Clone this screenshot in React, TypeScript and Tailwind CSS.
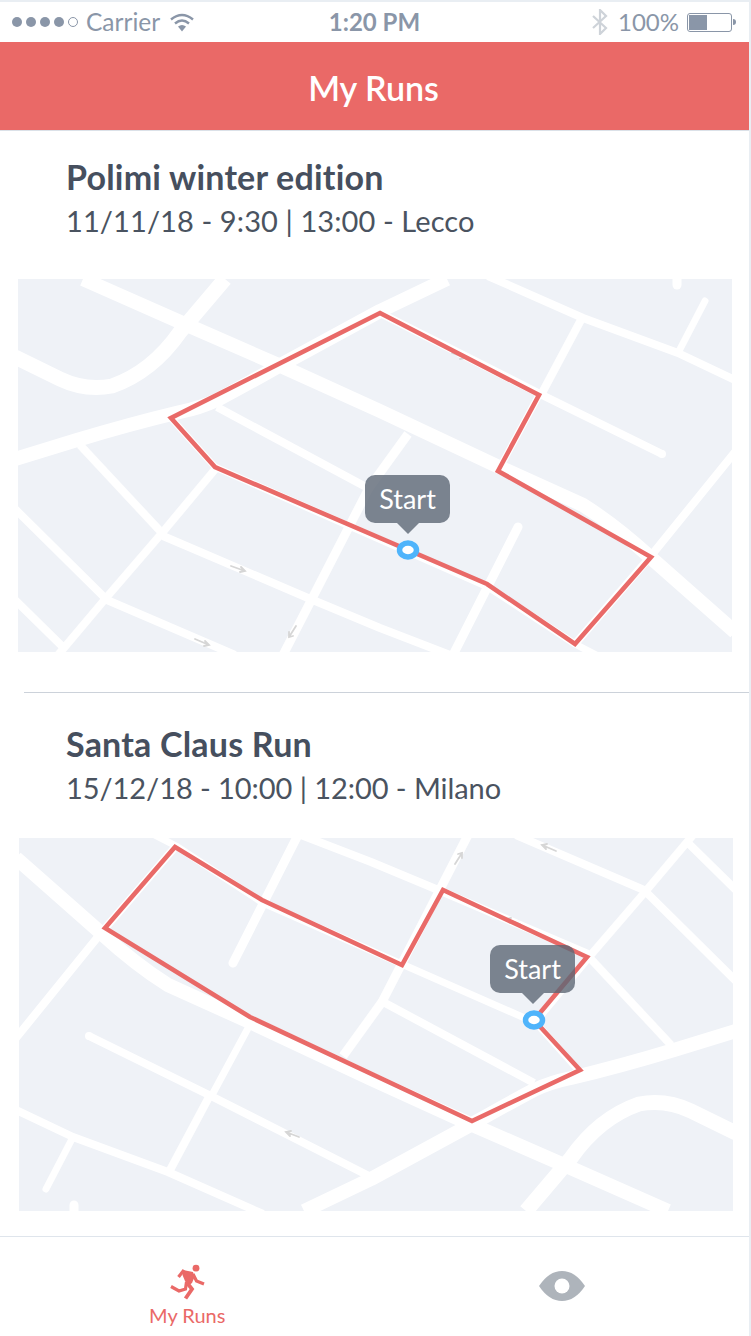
const lato = "font-['Lato',sans-serif]";

// road layer, drawn once in the coordinates of the first map. The second map is the same sheet turned 180deg.
function Roads() {
  return (
    <g fill="none" stroke="#ffffff" strokeLinecap="butt" strokeLinejoin="round">
      {/* thick avenues */}
      <path d="M83 279 L187 325 L283 367 L380 411 L497 466 L583 505 Q615 525 650 557 L735 632" strokeWidth="14" />
      <path d="M447 279 L380 311 L277 367 Q240 388 217 400 Q200 408 180 412 Q130 424 77 440 L15 459" strokeWidth="14" />
      <path d="M225 279 L180 332 Q152 372 112 386 Q85 391 60 379 L15 357" strokeWidth="15" />
      {/* smaller streets */}
      <path d="M488 276 L583 318 L678 353 L735 380" strokeWidth="8" />
      <path d="M380 313 L542 395 L662 454" strokeWidth="8" />
      <path d="M662 454 L662 454" strokeWidth="8" strokeLinecap="round" />
      <path d="M217 407 L366 487" strokeWidth="8" />
      <path d="M283 655 L369 488 L408 434" strokeWidth="9" />
      <path d="M217 467 L162 533 L106 598 L58 655" strokeWidth="8" />
      <path d="M80 445 L162 533" strokeWidth="8" />
      <path d="M15 509 L105 598" strokeWidth="8" />
      <path d="M15 600 L66 650" strokeWidth="8" />
      <path d="M163 536 L308 598 L380 628 L450 655" strokeWidth="8" />
      <path d="M107 600 L235 655" strokeWidth="8" />
      <path d="M518 527 L453 655" strokeWidth="9" strokeLinecap="round" />
      <path d="M582 318 L542 393" strokeWidth="8" />
      <path d="M705 301 L678 353" strokeWidth="7" strokeLinecap="round" />
      <path d="M677 276 L677 285" strokeWidth="9" strokeLinecap="round" />
      <path d="M735 452 L650 557 L575 644" strokeWidth="8" />
      <path d="M215 467 L488 587 L575 644 L600 657" strokeWidth="7" />
      <path d="M171 418 L215 467" strokeWidth="7" />
      <path d="M539 395 L498 471" strokeWidth="7" />
      {/* one way arrows */}
      <g stroke="#d6d6d6" strokeWidth="1.8" strokeLinecap="round" strokeLinejoin="miter">
        <path d="M231 566 L245 571 M241 567 L245 571 L240 572" />
        <path d="M195 639 L209 645 M205 641 L209 645 L204 646" />
        <path d="M296 626 L289 637 M289 632 L289 637 L293 636" />
        <path d="M452 353 L465 358 M461 354 L465 358 L460 359" />
      </g>
    </g>
  );
}

function RunMap({ route, marker, tip, turned, className }: { route: string; marker: [number, number]; tip: string; turned?: boolean; className: string }) {
  return (
    <div className={`relative h-[373px] w-[714px] bg-[#eff2f7] ${className}`}>
      <svg viewBox="0 0 714 373" className="block h-full w-full">
        <g transform={turned ? 'rotate(180 357 186.5) translate(-18 -279)' : 'translate(-18 -279)'}>
          <Roads />
        </g>
        <polygon points={route} fill="none" stroke="#e96a68" strokeWidth="4.6" strokeLinejoin="miter" />
        <ellipse cx={marker[0]} cy={marker[1]} rx="8.5" ry="7" fill="#ffffff" stroke="#4fb4fb" strokeWidth="5.5" />
      </svg>
      <div className={`absolute h-[48px] w-[85px] ${tip}`}>
        <div className={`flex h-full items-center justify-center rounded-[10px] bg-[#5d6774]/80 text-[27px] text-white ${lato}`}>
          Start
        </div>
        <div className="mx-auto h-0 w-0 border-x-[11px] border-t-[11px] border-x-transparent border-t-[#5d6774]/80" />
      </div>
    </div>
  );
}

function StatusBar() {
  return (
    <div className={`relative flex h-[40px] items-center justify-between bg-white pl-[12px] pr-[13px] text-[24.5px] text-[#8a96a8] ${lato}`}>
      <div className="flex items-center">
        <div className="flex items-center gap-[4px]">
          <span className="h-[10px] w-[10px] rounded-full bg-[#8a96a8]" />
          <span className="h-[10px] w-[10px] rounded-full bg-[#8a96a8]" />
          <span className="h-[10px] w-[10px] rounded-full bg-[#8a96a8]" />
          <span className="h-[10px] w-[10px] rounded-full bg-[#8a96a8]" />
          <span className="h-[10px] w-[10px] rounded-full border border-[#8a96a8]" />
        </div>
        <span className="ml-[8px]">Carrier</span>
        <svg width="24" height="19" viewBox="0 0 24 19" className="ml-[10px]" fill="none" stroke="#8a96a8" strokeWidth="2.4">
          <path d="M1 6.5 Q12 -2.5 23 6.5" />
          <path d="M5 10.5 Q12 4.5 19 10.5" />
          <path d="M12 18.5 L8 13.6 Q12 10.6 16 13.6 Z" fill="#8a96a8" stroke="none" />
        </svg>
      </div>
      <span className="absolute left-0 right-0 text-center text-[24px] font-bold">1:20 PM</span>
      <div className="relative flex items-center">
        <svg width="16" height="26" viewBox="0 0 16 26" fill="none" stroke="#ced3d9" strokeWidth="2.2">
          <path d="M1 7 L14 19 L8 25 L8 1 L14 7 L1 19" />
        </svg>
        <span className="ml-[10px] text-[24px]">100%</span>
        <div className="ml-[8px] flex h-[19px] w-[45px] rounded-[3px] border border-[#8a96a8] p-[1px]">
          <div className="h-full w-[18px] bg-[#8a96a8]" />
        </div>
        <div className="ml-[1px] h-[6px] w-[3px] rounded-r-full bg-[#8a96a8]" />
      </div>
    </div>
  );
}

function RunnerIcon() {
  return (
    <svg width="36" height="36" viewBox="0 0 36 36" fill="none" stroke="#ea6967" strokeWidth="3.2" strokeLinejoin="miter">
      <circle cx="27" cy="4.2" r="3.4" fill="#ea6967" stroke="none" />
      <path d="M14 6 L24 8 L25.5 13 L23 19 L19 22 L16 17 L13.5 11 Z" fill="#ea6967" stroke="none" />
      <path d="M15 6 L9.5 13" />
      <path d="M24 10 L27.5 17 L35 20" />
      <path d="M17.5 18 L16.5 25 L10 27 L2 22.5" />
      <path d="M19 20 L23 25 L16.5 34.5" strokeWidth="3.8" />
    </svg>
  );
}

export default function App() {
  return (
    <div className={`h-[1336px] w-[751px] overflow-hidden bg-[#e9eef3] pr-[2px] pt-[2px] ${lato}`}>
      <div className="flex h-full flex-col bg-white">
        <StatusBar />
        <header className="flex h-[88px] items-center justify-center bg-[#ea6967] pr-[2px] pt-[3px] text-[34px] font-semibold text-white">
          My Runs
        </header>
        <div className="h-px bg-[#dbe1e8]" />

        <main className="flex-1">
          <h2 className="ml-[66px] mt-[27px] text-[34px] font-bold leading-[38px] tracking-[0.2px] text-[#464f5e] [font-variant-ligatures:none]">Polimi winter edition</h2>
          <p className="ml-[66px] mt-[7px] text-[29px] leading-[36px] tracking-[0.1px] text-[#4a5360]">11/11/18 - 9:30 | 13:00 - Lecco</p>
          <RunMap
            className="ml-[18px] mt-[40px]"
            route="362,34 521,116 480,192 633,278 557,365 469,305 197,188 153,139"
            marker={[390, 271]}
            tip="left-[347px] top-[196px]"
          />
          <div className="ml-[24px] mt-[40px] h-px bg-[#ccd2da]" />

          <h2 className="ml-[66px] mt-[32px] text-[34px] font-bold leading-[38px] tracking-[0.2px] text-[#464f5e] [font-variant-ligatures:none]">Santa Claus Run</h2>
          <p className="ml-[66px] mt-[7px] text-[29px] leading-[36px] tracking-[-0.06px] text-[#4a5360]">15/12/18 - 10:00 | 12:00 - Milano</p>
          <RunMap
            className="ml-[19px] mt-[32px]"
            route="156,9 243,62 383,127 424,52 568,119 515,182 561,232 453,283 231,179 86,90"
            marker={[515, 182]}
            tip="left-[471px] top-[107px]"
            turned
          />
        </main>

        <nav className="grid h-[100px] grid-cols-2 border-t border-[#dfe5ec]">
          <div className="flex flex-col items-center pt-[27px] text-[#ea6967]">
            <RunnerIcon />
            <span className="mt-[3px] text-[20px] leading-[24px]">My Runs</span>
          </div>
          <div className="flex justify-center pt-[34px]">
            <svg width="46" height="30" viewBox="0 0 46 30">
              <path d="M0 15 Q10 0 23 0 Q36 0 46 15 Q36 30 23 30 Q10 30 0 15 Z" fill="#aeb4bb" />
              <circle cx="23" cy="15" r="7.5" fill="#ffffff" />
            </svg>
          </div>
        </nav>
      </div>
    </div>
  );
}
